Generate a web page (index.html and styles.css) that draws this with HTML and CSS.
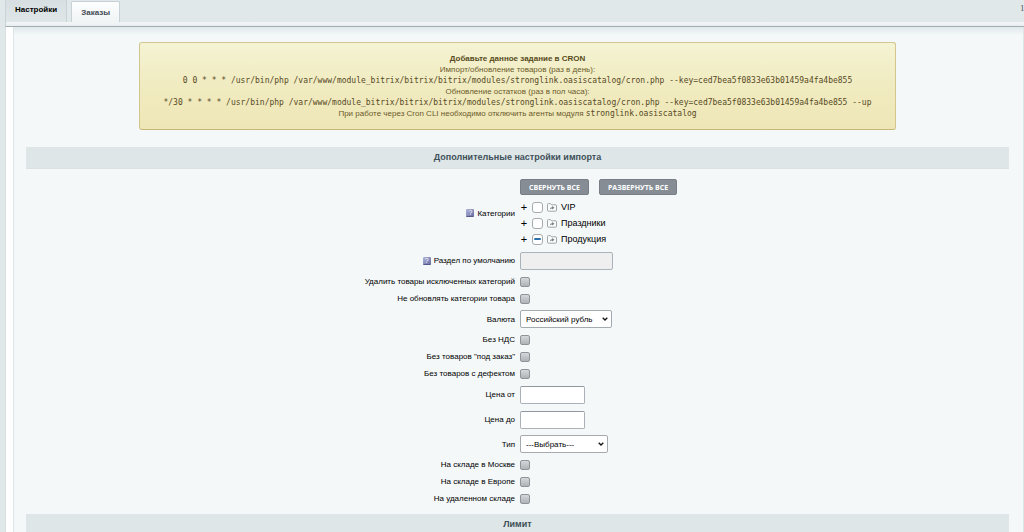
FILE: index.html
```html
<!DOCTYPE html>
<html lang="ru">
<head>
    <meta charset="UTF-8">
    <meta name="viewport" content="width=device-width, initial-scale=1.0">
    <title>Настройки модуля</title>
    <link rel="stylesheet" href="styles.css">
</head>
<body>
    <svg class="sprite" aria-hidden="true">
        <symbol id="folder" viewBox="0 0 10 9">
            <path d="M.5 7.200V1.600Q.5.6 1.500.6h2l1 1.200h4q1 0 1 1v4.400q0 1-1 1h-7q-1 0-1-1z" fill="#fafbfb" stroke="#8b9092" stroke-width=".8"/>
            <path d="M2.800 6.400Q3 4.300 5.200 4.200V3.100L7.400 4.800 5.200 6.400V5.400Q3.800 5.300 2.800 6.400z" fill="#75797b"/>
        </symbol>
    </svg>

    <nav class="tabs">
        <button type="button" class="tab tab-active">Настройки</button>
        <button type="button" class="tab">Заказы</button>
        <span class="tabs-more">1</span>
    </nav>

    <div class="panel">
        <main class="content">
            <div class="note">
                <b>Добавьте данное задание в CRON</b><br>
                Импорт/обновление товаров (раз в день):<br>
                <code>0 0 * * * /usr/bin/php /var/www/module_bitrix/bitrix/bitrix/modules/stronglink.oasiscatalog/cron.php --key=ced7bea5f0833e63b01459a4fa4be855</code><br>
                Обновление остатков (раз в пол часа):<br>
                <code>*/30 * * * * /usr/bin/php /var/www/module_bitrix/bitrix/bitrix/modules/stronglink.oasiscatalog/cron.php --key=ced7bea5f0833e63b01459a4fa4be855 --up</code><br>
                При работе через Cron CLI необходимо отключить агенты модуля <code>stronglink.oasiscatalog</code>
            </div>

            <form>
                <h2 class="heading">Дополнительные настройки импорта</h2>

                <div class="row row-tree">
                    <div class="name"><span class="hint">?</span><span>Категории</span></div>
                    <div class="field">
                        <div class="tree-buttons">
                            <button type="button" class="btn">Свернуть все</button>
                            <button type="button" class="btn">Развернуть все</button>
                        </div>
                        <ul class="tree">
                            <li>
                                <button type="button" class="toggle" aria-label="Развернуть">+</button>
                                <input type="checkbox" class="tree-check" id="catVip">
                                <svg class="folder"><use href="#folder"/></svg>
                                <label for="catVip">VIP</label>
                            </li>
                            <li>
                                <button type="button" class="toggle" aria-label="Развернуть">+</button>
                                <input type="checkbox" class="tree-check" id="catHolidays">
                                <svg class="folder"><use href="#folder"/></svg>
                                <label for="catHolidays">Праздники</label>
                            </li>
                            <li>
                                <button type="button" class="toggle" aria-label="Развернуть">+</button>
                                <input type="checkbox" class="tree-check tree-check-part" id="catProducts">
                                <svg class="folder"><use href="#folder"/></svg>
                                <label for="catProducts">Продукция</label>
                            </li>
                        </ul>
                    </div>
                </div>

                <div class="row row-input">
                    <div class="name"><span class="hint">?</span><label for="section">Раздел по умолчанию</label></div>
                    <div class="field"><input type="text" class="text text-wide" id="section" disabled></div>
                </div>
                <div class="row">
                    <div class="name"><label for="deleteExclude">Удалить товары исключенных категорий</label></div>
                    <div class="field"><input type="checkbox" class="check" id="deleteExclude"></div>
                </div>
                <div class="row">
                    <div class="name"><label for="keepCategory">Не обновлять категории товара</label></div>
                    <div class="field"><input type="checkbox" class="check" id="keepCategory"></div>
                </div>
                <div class="row row-select">
                    <div class="name"><label for="currency">Валюта</label></div>
                    <div class="field">
                        <select class="select" id="currency">
                            <option>Российский рубль</option>
                        </select>
                    </div>
                </div>
                <div class="row">
                    <div class="name"><label for="noVat">Без НДС</label></div>
                    <div class="field"><input type="checkbox" class="check" id="noVat"></div>
                </div>
                <div class="row">
                    <div class="name"><label for="notOnOrder">Без товаров "под заказ"</label></div>
                    <div class="field"><input type="checkbox" class="check" id="notOnOrder"></div>
                </div>
                <div class="row">
                    <div class="name"><label for="notDefect">Без товаров с дефектом</label></div>
                    <div class="field"><input type="checkbox" class="check" id="notDefect"></div>
                </div>
                <div class="row row-input">
                    <div class="name"><label for="priceFrom">Цена от</label></div>
                    <div class="field"><input type="text" class="text" id="priceFrom"></div>
                </div>
                <div class="row row-input">
                    <div class="name"><label for="priceTo">Цена до</label></div>
                    <div class="field"><input type="text" class="text" id="priceTo"></div>
                </div>
                <div class="row row-select">
                    <div class="name"><label for="type">Тип</label></div>
                    <div class="field">
                        <select class="select select-type" id="type">
                            <option>---Выбрать---</option>
                        </select>
                    </div>
                </div>
                <div class="row">
                    <div class="name"><label for="moscow">На складе в Москве</label></div>
                    <div class="field"><input type="checkbox" class="check" id="moscow"></div>
                </div>
                <div class="row">
                    <div class="name"><label for="europe">На складе в Европе</label></div>
                    <div class="field"><input type="checkbox" class="check" id="europe"></div>
                </div>
                <div class="row">
                    <div class="name"><label for="remote">На удаленном складе</label></div>
                    <div class="field"><input type="checkbox" class="check" id="remote"></div>
                </div>

                <h2 class="heading heading-next">Лимит</h2>
            </form>
        </main>
    </div>
</body>
</html>
```

FILE: styles.css
```css
* {
    margin: 0;
    padding: 0;
    box-sizing: border-box;
}

html {
    overflow: hidden;
}

body {
    padding-left: 5px;
    font-family: "Liberation Sans", Arial, sans-serif;
    font-size: 8px;
    color: #000;
    background: #e0e8ea;
}

button,
input,
select {
    font-family: inherit;
    font-size: inherit;
    color: inherit;
}

.sprite {
    display: none;
}

/* Tabs */
.tabs {
    display: flex;
    align-items: flex-end;
    gap: 4px;
    height: 27px;
    padding-bottom: 4px;
    border-left: 1px solid #cbd3d6;
    border-bottom: 1px solid #a3acaf;
    background: linear-gradient(#e0e8ea 22px, #f4f6f7 22px, #e8edef 26px);
}

.tab {
    height: 21px;
    padding: 0 9px;
    border: 1px solid #c8d1d5;
    border-bottom: none;
    border-radius: 2px 2px 0 0;
    background: linear-gradient(#fdfefe, #f0f4f5);
    font-weight: bold;
    color: #3f4b54;
}

.tab-active {
    height: 22px;
    padding-bottom: 3px;
    border-width: 0 1px 0 0;
    border-radius: 0;
    background: linear-gradient(#d7dfe2, #dfe6e8);
    color: #000;
}

.tabs-more {
    align-self: flex-start;
    width: 4px;
    margin-left: auto;
    padding-top: 3px;
    overflow: hidden;
    font-family: "Liberation Serif", serif;
    font-size: 9px;
    color: #555;
}

/* Panel */
.panel {
    padding-left: 7px;
    border-left: 1px solid #d9dfe1;
    background: #fff;
}

.content {
    padding: 15px 14px 0 12px;
    border: 1px solid #dce5e8;
    border-top: none;
    background: linear-gradient(#dfe8eb, #f4f8f9 8px);
}

.note {
    width: fit-content;
    min-width: 757px;
    margin: 0 auto 17px;
    padding: 10px 11px;
    border: 1px solid #d3c68c;
    border-bottom-color: #c9b873;
    border-radius: 3px;
    background: linear-gradient(#f4f3d3, #f0ebc0 50%, #eee6b6);
    line-height: 11px;
    text-align: center;
    color: #6b5a2c;
}

.note b {
    color: #574a20;
}

.note code {
    font-family: "DejaVu Sans Mono", monospace;
    font-size: 8px;
    color: #57491f;
}

.heading {
    padding: 5px 0;
    border-bottom: 1px solid #dae2e4;
    background: #dfe6e8;
    font-size: 9px;
    line-height: 11px;
    text-align: center;
    color: #3e5058;
}

.heading-next {
    margin-top: 7px;
}

/* Form rows */
.row {
    display: grid;
    grid-template-columns: 1fr 1fr;
    gap: 5px;
    align-items: center;
    min-height: 17px;
}

.row-input {
    min-height: 25px;
}

.row-select {
    min-height: 24px;
}

.row-tree {
    padding: 10px 0 1px;
}

.name {
    display: flex;
    justify-content: flex-end;
    align-items: center;
    gap: 3px;
}

.field {
    display: flex;
    align-items: center;
}

.row-tree .field {
    display: block;
}

.hint {
    width: 8px;
    height: 8px;
    border-bottom: 1px solid #54598a;
    border-radius: 1px;
    background: linear-gradient(135deg, #b3b7da, #686da3);
    font-size: 7px;
    line-height: 8px;
    text-align: center;
    color: #fff;
}

.tree-buttons {
    display: flex;
    gap: 10px;
    margin-bottom: 4px;
}

.btn {
    height: 16px;
    padding: 0 8px;
    border: 1px solid #777e87;
    border-radius: 2px;
    background: #868d95;
    font-family: "Open Sans", sans-serif;
    font-size: 7px;
    font-weight: bold;
    text-transform: uppercase;
    color: #fff;
}

.tree {
    list-style: none;
    font-size: 9px;
}

.tree li {
    display: flex;
    align-items: center;
    gap: 4px;
    height: 16px;
}

.toggle {
    width: 8px;
    border: none;
    background: none;
    font-size: 11px;
    line-height: 12px;
}

.tree-check {
    display: grid;
    place-items: center;
    width: 11px;
    height: 11px;
    border: 1px solid #a7abad;
    border-radius: 3px;
    background: #fff;
    appearance: none;
}

.tree-check-part::before {
    content: "";
    width: 7px;
    height: 2px;
    border-radius: 1px;
    background: #2a70ae;
}

.folder {
    width: 10px;
    height: 9px;
}

.check {
    width: 10px;
    height: 10px;
    border: 1px solid #8e9498;
    border-radius: 2px;
    background: linear-gradient(#d5d8da, #aeb3b6);
    appearance: none;
}

.text {
    width: 65px;
    height: 18px;
    padding: 0 4px;
    border: 1px solid #aab2b8;
    border-top-color: #8f989e;
    border-radius: 2px;
    background: #fff;
}

.text-wide {
    width: 93px;
}

.text:disabled {
    border-color: #a9b3bb;
    background: #efefef;
}

.select {
    width: 92px;
    height: 18px;
    padding: 0 2px 0 5px;
    border: 1px solid #a3abb0;
    border-radius: 2px;
    /* thin chevron in place of the native arrow */
    background: #fff url("data:image/svg+xml,%3Csvg xmlns='http://www.w3.org/2000/svg' width='6' height='4'%3E%3Cpath d='M.7.7 3 3 5.300.7' fill='none' stroke='%23111' stroke-width='1.300'/%3E%3C/svg%3E") no-repeat right 3px center;
    appearance: none;
}

.select-type {
    width: 88px;
}
```
